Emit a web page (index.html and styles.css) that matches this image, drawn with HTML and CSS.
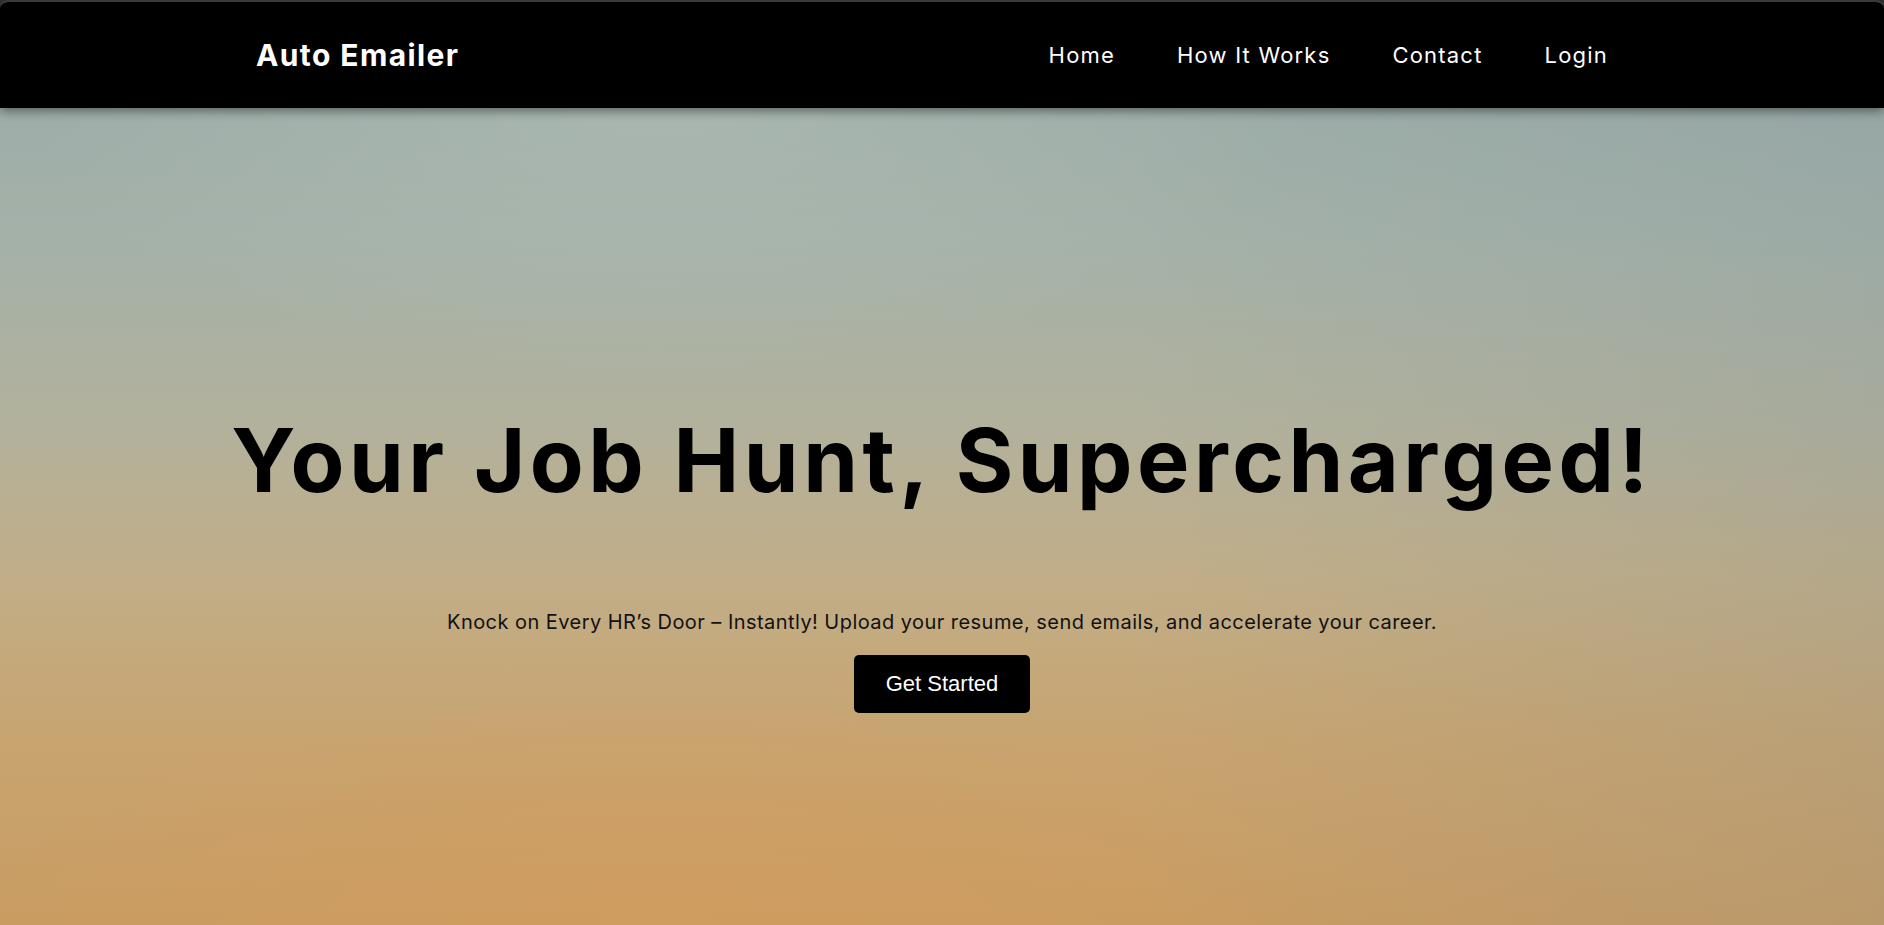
FILE: index.html
```html
<!DOCTYPE html>
<html lang="en">
<head>
<meta charset="utf-8">
<title>Auto Emailer</title>
<link rel="stylesheet" href="styles.css">
</head>
<body>
<div class="frame">
  <header class="topbar">
    <div class="brand">Auto Emailer</div>
    <nav class="links">
      <a href="#">Home</a>
      <a href="#">How It Works</a>
      <a href="#">Contact</a>
      <a href="#">Login</a>
    </nav>
  </header>
  <main class="hero">
    <h1 class="hero-title">Your Job Hunt, Supercharged!</h1>
    <p class="hero-sub">Knock on Every HR’s Door – Instantly! Upload your resume, send emails, and accelerate your career.</p>
    <a class="cta" href="#">Get Started</a>
  </main>
</div>
</body>
</html>
```

FILE: styles.css
```css
* { box-sizing: border-box; }
html, body { margin: 0; height: 100%; }
body {
  background: #2e2e2e;
  font-family: "Inter", "DejaVu Sans", sans-serif;
  overflow: hidden;
}
.frame {
  height: 925px;
  border-top: 2px solid #3a3a3a;
  display: flex;
  flex-direction: column;
  background:
    radial-gradient(ellipse 900px 420px at 35% 10%, rgba(178,190,182,0.55), rgba(178,190,182,0) 70%),
    radial-gradient(ellipse 900px 300px at 35% 100%, rgba(214,156,92,0.55), rgba(214,156,92,0) 75%),
    linear-gradient(90deg, rgba(150,168,165,0.0) 0%, rgba(0,0,0,0) 60%, rgba(120,140,150,0.18) 100%),
    linear-gradient(180deg, #98aaa7 0%, #a4b1a9 25%, #b1b19d 45%, #c1ae88 62%, #c8a470 80%, #c99c62 100%);
  border-radius: 8px 8px 0 0;
  overflow: hidden;
}
.topbar {
  height: 106px;
  flex: none;
  background: #000;
  display: flex;
  align-items: center;
  justify-content: space-between;
  padding: 0 276px 0 256px;
  box-shadow: 0 3px 10px rgba(0,0,0,0.45);
  position: relative;
  z-index: 1;
}
.brand {
  color: #fff;
  font-weight: 700;
  font-size: 30px;
  letter-spacing: 1.4px;
}
.links {
  display: flex;
  gap: 62px;
}
.links a {
  color: #fff;
  text-decoration: none;
  font-size: 22px;
  font-weight: 400;
  letter-spacing: 1.2px;
}
.hero {
  flex: 1;
  display: flex;
  flex-direction: column;
  align-items: center;
  padding-top: 300px;
}
.hero-title {
  margin: 0;
  font-size: 88px;
  font-weight: 700;
  line-height: 1.2;
  color: #000;
  letter-spacing: 4.5px;
}
.hero-sub {
  margin: 95px 0 0;
  font-size: 20px;
  color: #111;
  line-height: 1.3;
  letter-spacing: 0.45px;
}
.cta {
  margin-top: 20px;
  background: #000;
  color: #fff;
  text-decoration: none;
  font-family: "Liberation Sans", Arial, sans-serif;
  font-size: 22px;
  line-height: 26px;
  padding: 16px 32px;
  border-radius: 5px;
}
```
